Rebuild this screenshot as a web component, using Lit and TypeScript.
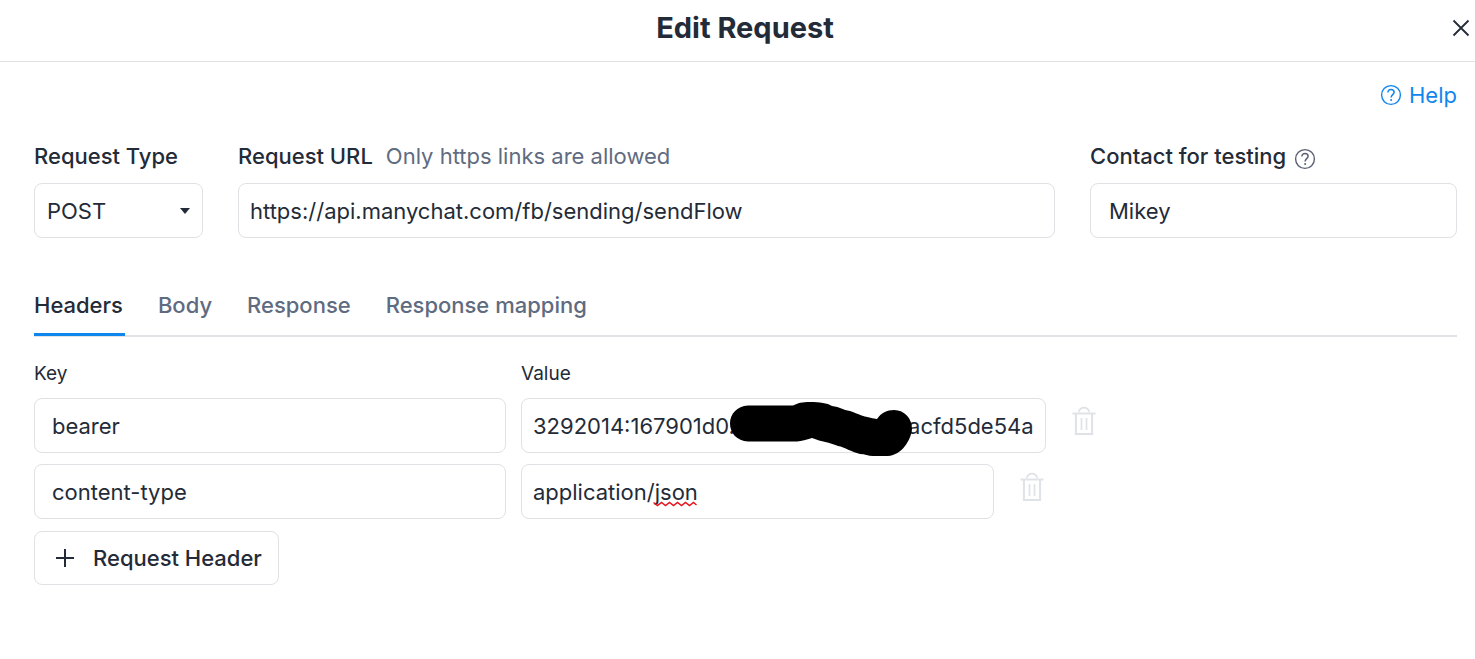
import { LitElement, html, css, svg } from "lit";
import { customElement, state } from "lit/decorators.js";

const questionIcon = html`<svg class="question" viewBox="0 0 22 22" width="22" height="22" fill="none" stroke="currentColor" aria-hidden="true">
  <circle cx="11" cy="11" r="9.4" stroke-width="1.4"></circle>
  <path d="M7.9 8.6c0-1.9 1.3-3.1 3.1-3.1s3.1 1.1 3.1 2.8c0 2.4-3 2.4-3 5.2" stroke-width="1.5"></path>
  <circle cx="11.1" cy="16" r="1" fill="currentColor" stroke="none"></circle>
</svg>`;

const trashIcon = html`<svg viewBox="0 0 24 30" width="24" height="30" fill="none" stroke="currentColor" aria-hidden="true">
  <path d="M0.5 7.5H23.5" stroke-width="2"></path>
  <path d="M6.6 6C7.6 3.2 9.5 1.7 12 1.7S16.4 3.2 17.4 6" stroke-width="1.8"></path>
  <path d="M3.9 8V28H20.1V8" stroke-width="2"></path>
  <path d="M9.5 12V24M14.5 12V24" stroke-width="1.7"></path>
</svg>`;

const scribble = svg`<path d="M18 3.500H63C68 1 72 0 80 0C90 0 97 1 102 4C110 5 113 8 120 9C128 12 134 15 147 17C151 11 157 8 164 8C175 8 182 17 182 27C181 38 172 53 158 54H143C138 54 135 52 130 52C121 50 115 45 108 44C99 40 92 40 82 36C76 38 72 39 67 39.500H18C7 39 0 31 0 21.500S7 4 18 3.500Z"></path>`;

interface HeaderRow {
  key: string;
  value: string;
  masked?: boolean;
  typo?: boolean;
}

@customElement("app-root")
export class AppRoot extends LitElement {
  static styles = css`
    :host {
      display: block;
      min-height: 100vh;
      background: #fff;
      color: #242b38;
      font-family: Inter, "Liberation Sans", sans-serif;
      font-size: 22px;
      line-height: 28px;
    }
    * { box-sizing: border-box; }
    button, input, select {
      font: inherit;
      color: inherit;
    }
    button { cursor: pointer; }
    svg { display: block; flex: none; }
    .top {
      display: grid;
      grid-template-columns: 1fr auto 1fr;
      align-items: center;
      height: 62px;
      padding: 0 5px 6px 20px;
      border-bottom: 1px solid #e0e2e5;
    }
    .title {
      grid-column: 2;
      margin: 0;
      font-size: 29px;
      line-height: 36px;
      font-weight: 700;
    }
    .close {
      justify-self: end;
      padding: 0;
      border: 0;
      background: none;
    }
    .content { padding: 19px 18px 40px 34px; }
    .help-line { display: flex; justify-content: flex-end; }
    .help {
      display: flex;
      align-items: center;
      gap: 7px;
      color: #0f86ee;
      text-decoration: none;
    }
    .request {
      display: grid;
      grid-template-columns: 169px minmax(0, 1fr) minmax(0, 367px);
      gap: 35px;
      margin-top: 33px;
    }
    .caption {
      display: flex;
      align-items: center;
      gap: 8px;
      margin-bottom: 13px;
      font-weight: 500;
      white-space: nowrap;
    }
    .hint { margin-left: 5px; font-weight: 400; color: #5f6b80; }
    .caption .question { margin-top: 5px; color: #5a6073; }
    .box {
      display: block;
      width: 100%;
      height: 55px;
      margin: 0;
      padding: 0 11px;
      border: 1px solid #dfe1e4;
      border-radius: 8px;
      background: #fff;
      outline: none;
    }
    .roomy { padding: 0 17px; }
    .contact { padding: 0 18px; }
    .pick { position: relative; }
    .pick select { appearance: none; padding: 0 12px; }
    .arrow {
      position: absolute;
      right: 13px;
      top: 25px;
      pointer-events: none;
    }
    .tabs {
      display: flex;
      gap: 33px;
      margin-top: 53px;
      border-bottom: 2px solid #e0e2e5;
    }
    .tab {
      margin-bottom: -1px;
      padding: 0 2px 14px 0;
      border: 0;
      border-bottom: 3px solid transparent;
      background: none;
      font-weight: 500;
      color: #5f6b80;
      white-space: nowrap;
    }
    .tab.active { border-bottom-color: #0f86ee; color: #242b38; }
    .rows {
      display: grid;
      grid-template-columns: minmax(0, 472px) minmax(0, 1fr);
      gap: 11px 15px;
      margin-top: 24px;
    }
    .column { font-size: 19px; line-height: 26px; }
    .value-line { display: flex; align-items: flex-start; gap: 26px; }
    .value { position: relative; }
    .value .box {
      width: auto;
      min-width: 473px;
      field-sizing: content;
    }
    .mask { position: absolute; left: 209px; top: 4px; }
    .squiggle { position: absolute; left: 132px; top: 37px; }
    .remove {
      margin-top: 8px;
      padding: 0;
      border: 0;
      background: none;
      color: #dfe2e7;
    }
    .add {
      display: flex;
      align-items: center;
      gap: 18px;
      width: max-content;
      height: 54px;
      margin-top: 12px;
      padding: 0 16px 0 20px;
      border: 1px solid #dfe1e4;
      border-radius: 8px;
      background: #fff;
      font-weight: 500;
    }
  `;

  @state() private active = "Headers";

  @state() private headers: HeaderRow[] = [
    { key: "bearer", value: "3292014:167901d0." + "•".repeat(14) + "acfd5de54a", masked: true },
    { key: "content-type", value: "application/json", typo: true },
  ];

  private tabs = ["Headers", "Body", "Response", "Response mapping"];

  private remove(row: HeaderRow) {
    this.headers = this.headers.filter((h) => h !== row);
  }

  private add() {
    this.headers = [...this.headers, { key: "", value: "" }];
  }

  private renderRow(row: HeaderRow) {
    return html`
      <input class="box roomy" aria-labelledby="key" .value=${row.key} spellcheck="false" />
      <div class="value-line">
        <div class="value">
          <input class="box" aria-labelledby="value" .value=${row.value} spellcheck="false" />
          ${row.masked
            ? html`<svg class="mask" viewBox="0 0 182 54" width="182" height="54" fill="#000" aria-hidden="true">${scribble}</svg>`
            : ""}
          ${row.typo
            ? html`<svg class="squiggle" viewBox="0 0 44 6" width="44" height="6" fill="none" stroke="#e8141c" stroke-width="1.5" aria-hidden="true">
                <path d="M0.500 1.500L4.500 4.500L8.500 1.500L12.500 4.500L16.500 1.500L20.500 4.500L24.500 1.500L28.500 4.500L32.500 1.500L36.500 4.500L40.500 1.500L43.500 4"></path>
              </svg>`
            : ""}
        </div>
        <button class="remove" aria-label="Remove header" @click=${() => this.remove(row)}>${trashIcon}</button>
      </div>
    `;
  }

  render() {
    return html`
      <header class="top">
        <h1 class="title">Edit Request</h1>
        <button class="close" aria-label="Close">
          <svg viewBox="0 0 18 18" width="18" height="18" fill="none" stroke="currentColor" stroke-width="1.8" aria-hidden="true">
            <path d="M1.500 1.500L16.500 16.500M16.500 1.500L1.500 16.500"></path>
          </svg>
        </button>
      </header>
      <main class="content">
        <div class="help-line"><a class="help" href="#help">${questionIcon}<span>Help</span></a></div>
        <div class="request">
          <div>
            <label class="caption" for="type">Request Type</label>
            <div class="pick">
              <select class="box" id="type">
                <option>POST</option>
                <option>GET</option>
                <option>PUT</option>
                <option>DELETE</option>
              </select>
              <svg class="arrow" viewBox="0 0 10 6" width="10" height="6" fill="currentColor" aria-hidden="true"><path d="M0 0H10L5 6Z"></path></svg>
            </div>
          </div>
          <div>
            <label class="caption" for="url">Request URL <span class="hint">Only https links are allowed</span></label>
            <input class="box" id="url" value="https://api.manychat.com/fb/sending/sendFlow" spellcheck="false" />
          </div>
          <div>
            <label class="caption" for="contact">Contact for testing ${questionIcon}</label>
            <input class="box contact" id="contact" value="Mikey" spellcheck="false" />
          </div>
        </div>
        <nav class="tabs" role="tablist">
          ${this.tabs.map(
            (t) => html`<button
              class="tab ${t === this.active ? "active" : ""}"
              role="tab"
              aria-selected=${t === this.active}
              @click=${() => (this.active = t)}
            >${t}</button>`,
          )}
        </nav>
        <div class="rows">
          <span class="column" id="key">Key</span>
          <span class="column" id="value">Value</span>
          ${this.headers.map((h) => this.renderRow(h))}
        </div>
        <button class="add" @click=${this.add}>
          <svg viewBox="0 0 20 20" width="20" height="20" fill="none" stroke="currentColor" stroke-width="2" aria-hidden="true">
            <path d="M1 10H19M10 1V19"></path>
          </svg>
          Request Header
        </button>
      </main>
    `;
  }
}
